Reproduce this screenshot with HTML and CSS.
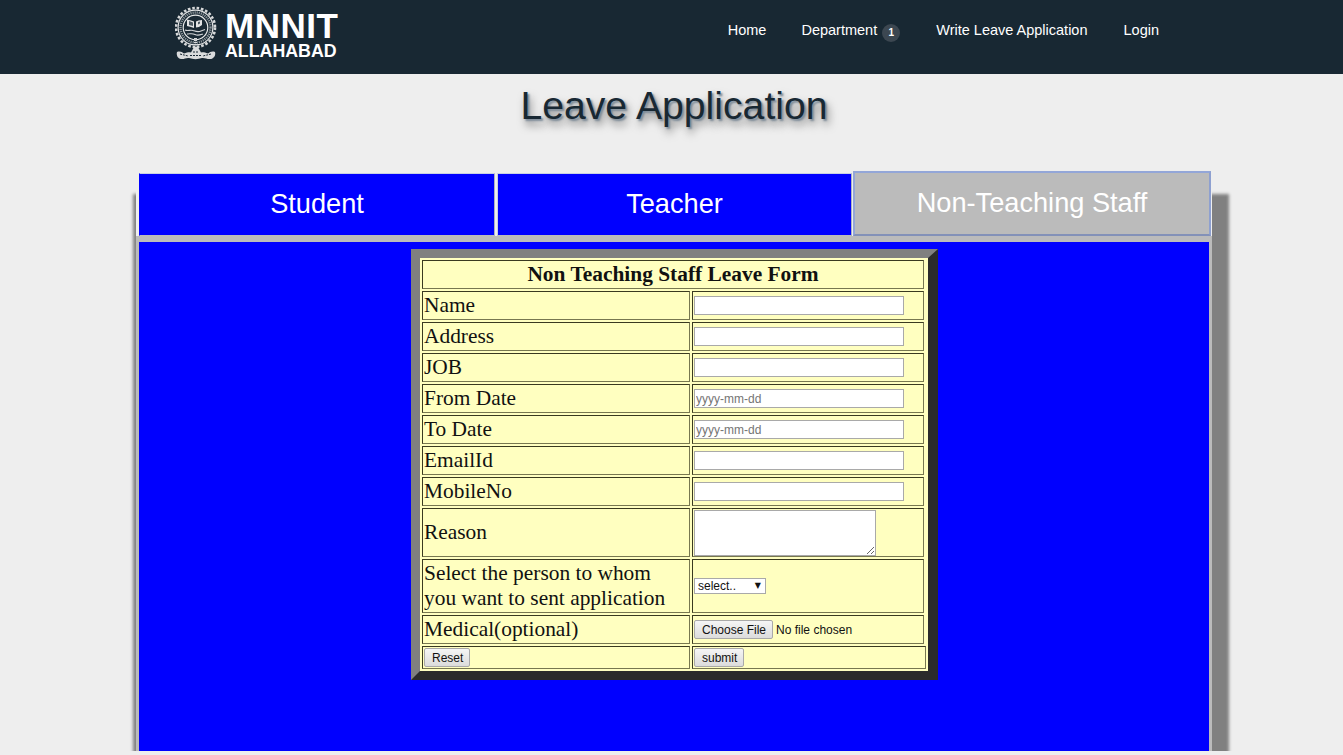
FILE: index.html
```html
<!DOCTYPE html>
<html lang="en">
<head>
<meta charset="utf-8">
<title>Leave Application</title>
<link rel="stylesheet" href="styles.css">
</head>
<body>
<div class="page">
  <header class="topbar">
    <a class="brand" href="#">
      <svg class="emblem" viewBox="0 0 43 56" width="43" height="56" aria-hidden="true">
        <circle cx="20.500" cy="21.500" r="19.500" fill="none" stroke="#d6d8d9" stroke-width="2.600" stroke-dasharray="2.600 1.800"/>
        <circle cx="20.500" cy="21.500" r="17.400" fill="none" stroke="#e4e5e6" stroke-width="1.200"/>
        <circle cx="20.500" cy="21.500" r="15" fill="none" stroke="#8f979c" stroke-width="2.400" stroke-dasharray="1.200 .9"/>
        <circle cx="20.500" cy="21.500" r="12.300" fill="#1b2a35" stroke="#e9eaea" stroke-width="1.200"/>
        <path d="M12 13.500l4 1 3 1v6.500l-3-1-4-1zM21 15.500l2.500-1 3.500-.5v5l-3 2-3 .5z" fill="#e3e4e5"/>
        <path d="M14 15l4 1.500v3.500l-4-1zM23 16l2-.5v2l-2 1z" fill="#4d5a63"/>
        <path d="M10 24c3 1.500 5-.5 8 .5s5 2 8 .5l4-1.500M12 28c3 0 5-1 8 .5s5 .5 8-.5" fill="none" stroke="#d3d5d7" stroke-width="1.100"/>
        <path d="M20.500 32v8" stroke="#d3d5d7" stroke-width="3" stroke-dasharray="1 1"/>
        <path d="M2 46c-1 3 1 7 4 7 3 .500 5-1.500 8-1 4 1.500 9 1.500 13 0 3-.500 5 1.500 9 1 3-.500 5-4 4-7-3-1-5 0-7 1.500-3-1-5-1.500-7-1-2-4-3-6-5-6s-3 2-5 6c-2-.500-4 0-7 1-2-1.500-4-2.500-7-1.500z" fill="#d9dbdc"/>
        <path d="M5 48c3 1 5 1 8 2M36 48c-3 1-5 1-8 2M18 46h5M15 49.500h11" fill="none" stroke="#1b2a35" stroke-width="1" stroke-dasharray="2 1"/>
      </svg>
      <span class="wordmark">
        <span class="wordmark-main">MNNIT</span>
        <span class="wordmark-sub">ALLAHABAD</span>
      </span>
    </a>
    <nav class="nav">
      <a class="nav-link nav-first" href="#">Home</a>
      <a class="nav-link" href="#">Department <span class="badge">1</span></a>
      <a class="nav-link" href="#">Write Leave Application</a>
      <a class="nav-link" href="#">Login</a>
    </nav>
  </header>

  <main class="content">
    <h1 class="title">Leave Application</h1>
    <section class="tabset">
      <div class="tabs">
        <button class="tab tab-first" type="button">Student</button>
        <button class="tab tab-second" type="button">Teacher</button>
        <button class="tab tab-active" type="button">Non-Teaching Staff</button>
      </div>
      <div class="panel">
        <form>
          <table class="leave-form">
            <colgroup><col class="col-label"><col class="col-input"><col class="col-rest"></colgroup>
            <tr><th colspan="2">Non Teaching Staff Leave Form</th></tr>
            <tr><td>Name</td><td><input class="field" type="text"></td></tr>
            <tr><td>Address</td><td><input class="field" type="text"></td></tr>
            <tr><td>JOB</td><td><input class="field" type="text"></td></tr>
            <tr><td>From Date</td><td><input class="field" type="text" placeholder="yyyy-mm-dd"></td></tr>
            <tr><td>To Date</td><td><input class="field" type="text" placeholder="yyyy-mm-dd"></td></tr>
            <tr><td>EmailId</td><td><input class="field" type="text"></td></tr>
            <tr><td>MobileNo</td><td><input class="field" type="text"></td></tr>
            <tr><td>Reason</td><td class="area-cell"><textarea class="area"></textarea></td></tr>
            <tr><td>Select the person to whom<br>you want to sent application</td><td><span class="picker-wrap"><select class="picker"><option>select..</option></select></span></td></tr>
            <tr><td>Medical(optional)</td><td><input class="file" type="file"></td></tr>
            <tr><td><input class="btn" type="reset" value="Reset"></td><td colspan="2"><input class="btn" type="submit" value="submit"></td></tr>
            <tr class="ghost"><td></td><td></td><td></td></tr>
          </table>
        </form>
      </div>
    </section>
  </main>
</div>
</body>
</html>
```

FILE: styles.css
```css
* { box-sizing: border-box; }
html, body { margin: 0; height: 100%; overflow: hidden; background: #eeeeee; }
body { font-family: "Liberation Sans", Arial, sans-serif; }

.page { height: 751px; overflow: hidden; }

.topbar {
  height: 74px;
  background: #182833;
  display: flex;
  align-items: flex-start;
  padding-left: 175px;
}
.brand { display: flex; align-items: flex-start; color: #fff; text-decoration: none; padding-top: 6px; }
.emblem { display: block; }
.wordmark { display: flex; flex-direction: column; margin-left: 7px; font-weight: 700; color: #fff; }
.wordmark-main { font-size: 35px; line-height: 31px; margin-top: 4px; letter-spacing: .5px; }
.wordmark-sub { font-size: 17.800px; line-height: 20px; }

.nav { margin-left: auto; display: flex; padding-right: 166px; padding-top: 20px; }
.nav-link { color: #fff; font-size: 14.500px; line-height: 20px; padding: 0 18px; text-decoration: none; white-space: nowrap; }
.nav-first { padding-right: 17px; }
.badge {
  display: inline-block;
  width: 18px;
  height: 18px;
  margin-left: 1px;
  border-radius: 50%;
  background: #3c4751;
  color: #fff;
  font-size: 10px;
  font-weight: 700;
  line-height: 18px;
  text-align: center;
  vertical-align: -1px;
}

.content { width: 1348px; }
.title {
  margin: 0;
  padding-top: 9px;
  height: 99px;
  text-align: center;
  font-size: 39.200px;
  line-height: 46px;
  font-weight: 400;
  color: #182833;
  text-shadow: 2px 2px 2px #7d8b98, 3px 6px 9px #777;
}

.tabset {
  width: 1076px;
  margin: 0 auto;
  box-shadow: 7px 31px 3px 10px #808080;
  height: 640px;
  background: #bbbbbb;
}
.tabs { display: flex; padding-left: 3px; height: 63px; background: #eeeeee; }
.tab {
  flex: none;
  height: 63px;
  border: 1px solid #c8d0e4;
  border-right-color: #aab0c0;
  border-bottom-color: #bbbbbb;
  background: #0000ff;
  color: #fff;
  font-family: "Liberation Sans", Arial, sans-serif;
  font-size: 27.200px;
  padding: 0 0 2px;
}
.tab-first { width: 356px; margin-right: 2px; border-left-color: #0000ff; }
.tab-second { width: 355px; margin-right: 1px; }
.tab-active {
  width: 358px;
  height: 65px;
  margin-top: -2px;
  background: #bbbbbb;
  border: 2px solid #93a6d8;
  border-bottom-color: #8391b8;
  border-right-color: #8ea0d0;
}

.panel {
  border: 3px solid #bbbbbb;
  border-top-width: 6px;
  background: #0000ff;
  height: 577px;
  padding: 7px 0 0 1px;
}

.leave-form {
  width: 527px;
  margin: 0 auto;
  border-style: solid;
  border-width: 9px 10px 9px 9px;
  border-color: #808080 #2b2b2b #2b2b2b #808080;
  border-spacing: 2px;
  background: #ffffc0;
  font-family: "Liberation Serif", "Times New Roman", serif;
  font-size: 21.400px;
  color: #111;
}
.col-label { width: 268px; }
.col-input { width: 232px; }
.col-rest { width: 0; }
.leave-form th, .leave-form td {
  border: 1px solid #777750;
  border-top-color: #3a3a20;
  border-left-color: #3a3a20;
  padding: 1px;
  line-height: 25px;
  font-weight: 400;
}
.leave-form th { font-weight: 700; text-align: center; }
.leave-form .area-cell { padding-bottom: 0; }
.leave-form .ghost { visibility: collapse; }
.leave-form .ghost td { padding: 0; border: 0; line-height: 0; }

.field {
  display: block;
  width: 210px;
  height: 19px;
  margin: 2px 0;
  padding: 1px 1px;
  border: 1px solid #a9a9a9;
  background: #fff;
  font: 12px "Liberation Sans", Arial, sans-serif;
}
.field::placeholder { color: #757575; }
.area { display: block; width: 182px; height: 46px; margin: 0; border: 1px solid #a9a9a9; }
.picker-wrap { display: block; position: relative; width: 72px; height: 16px; }
.picker-wrap::after {
  content: "\25BC";
  position: absolute;
  top: 0;
  right: 5px;
  font: 8px/16px "DejaVu Sans", sans-serif;
  color: #111;
  pointer-events: none;
}
.picker {
  appearance: none;
  display: block;
  width: 72px;
  height: 16px;
  border: 1px solid #a9a9a9;
  border-radius: 0;
  background: #fff;
  font: 12px "Liberation Sans", Arial, sans-serif;
  padding: 0 0 0 3px;
  color: #111;
}
.file { display: block; height: 19px; margin: 2px 0; font: 12px "Liberation Sans", Arial, sans-serif; color: #111; }
.file::file-selector-button {
  height: 19px;
  padding: 0 6px 0 7px;
  margin-right: 3px;
  border: 1px solid #a9a9a9;
  border-radius: 2px;
  background: linear-gradient(#f5f5f5, #dcdcdc);
  font: 12px "Liberation Sans", Arial, sans-serif;
  color: #111;
}
.btn {
  display: block;
  height: 19px;
  padding: 0 6px 0 7px;
  border: 1px solid #a9a9a9;
  border-radius: 2px;
  background: linear-gradient(#f5f5f5, #dcdcdc);
  font: 12px "Liberation Sans", Arial, sans-serif;
  color: #111;
}
```
